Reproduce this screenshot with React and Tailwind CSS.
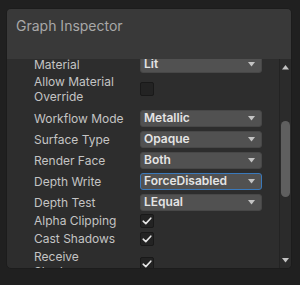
import React from "react";

const font = { fontFamily: "Inter, 'Noto Sans', sans-serif" };

function Arrow() {
  return (
    <svg width="7" height="5" viewBox="0 0 7 5" className="shrink-0">
      <path d="M0 0 H7 L3.5 4.5 Z" fill="#c4c4c4" />
    </svg>
  );
}

function Dropdown({ value, focused }) {
  return (
    <div
      className={
        "w-[122px] h-[17px] rounded-[3px] bg-[#515151] flex items-center justify-between pl-[3px] pr-[6px] text-[12px] font-semibold text-[#e4e4e4] border " +
        (focused ? "border-[#3a79bb]" : "border-[#474747]")
      }
    >
      <span className="leading-none">{value}</span>
      <Arrow />
    </div>
  );
}

function Check({ checked }) {
  return (
    <div className="w-[14px] h-[14px] rounded-[2px] bg-[#232323] border border-[#191919] flex items-center justify-center">
      {checked && (
        <svg width="10" height="8" viewBox="0 0 10 8">
          <path d="M1.2 4.2 L3.8 6.6 L8.8 1.2" fill="none" stroke="#e6e6e6" strokeWidth="1.6" strokeLinecap="round" strokeLinejoin="round" />
        </svg>
      )}
    </div>
  );
}

function Row({ label, children, h }) {
  return (
    <div className={"flex items-center " + h}>
      <div className="w-[106px] shrink-0">
        <div className="max-w-[90px] text-[12px] leading-[15px] text-[#c4c4c4]">{label}</div>
      </div>
      {children}
    </div>
  );
}

export default function App() {
  return (
    <div className="w-[300px] h-[285px] bg-[#202020] pt-[8px] pl-[6px]" style={font}>
      <div className="w-[286px] h-[261px] rounded-[5px] bg-[#2d2d2d] border border-[#1c1c1c] overflow-hidden flex flex-col">
        <div className="h-[50px] shrink-0 bg-[#393939] pl-[9px] pt-[8px] text-[14px] leading-[17px] text-[#a8a8a8]">
          Graph Inspector
        </div>
        <div className="flex-1 flex min-h-0">
          <div className="flex-1 overflow-hidden pl-[27px]">
            <div className="mt-[-4px] flex flex-col gap-[3px]">
              <Row label="Material" h="h-[18px]"><Dropdown value="Lit" /></Row>
              <div className="mt-[-2px]">
                <Row label="Allow Material Override" h="h-[30px]"><Check /></Row>
              </div>
              <div className="mt-[2px]">
                <Row label="Workflow Mode" h="h-[18px]"><Dropdown value="Metallic" /></Row>
              </div>
              <Row label="Surface Type" h="h-[18px]"><Dropdown value="Opaque" /></Row>
              <Row label="Render Face" h="h-[18px]"><Dropdown value="Both" /></Row>
              <Row label="Depth Write" h="h-[18px]"><Dropdown value="ForceDisabled" focused /></Row>
              <Row label="Depth Test" h="h-[18px]"><Dropdown value="LEqual" /></Row>
              <div className="mt-[-1px]">
                <Row label="Alpha Clipping" h="h-[15px]"><Check checked /></Row>
              </div>
              <Row label="Cast Shadows" h="h-[15px]"><Check checked /></Row>
              <Row label="Receive Shadows" h="h-[30px]"><Check checked /></Row>
            </div>
          </div>
          <div className="w-[12px] shrink-0 border-l border-[#232323] bg-[#2b2b2b] flex flex-col items-center pt-[6px]">
            <svg width="7" height="5" viewBox="0 0 7 5">
              <path d="M0 4.5 H7 L3.5 0 Z" fill="#c4c4c4" />
            </svg>
            <div className="mt-[51px] w-[9px] h-[76px] rounded-full bg-[#5f5f5f]" />
            <div className="flex-1" />
            <svg width="7" height="5" viewBox="0 0 7 5" className="mb-[5px]">
              <path d="M0 0 H7 L3.5 4.5 Z" fill="#c4c4c4" />
            </svg>
          </div>
        </div>
      </div>
    </div>
  );
}
